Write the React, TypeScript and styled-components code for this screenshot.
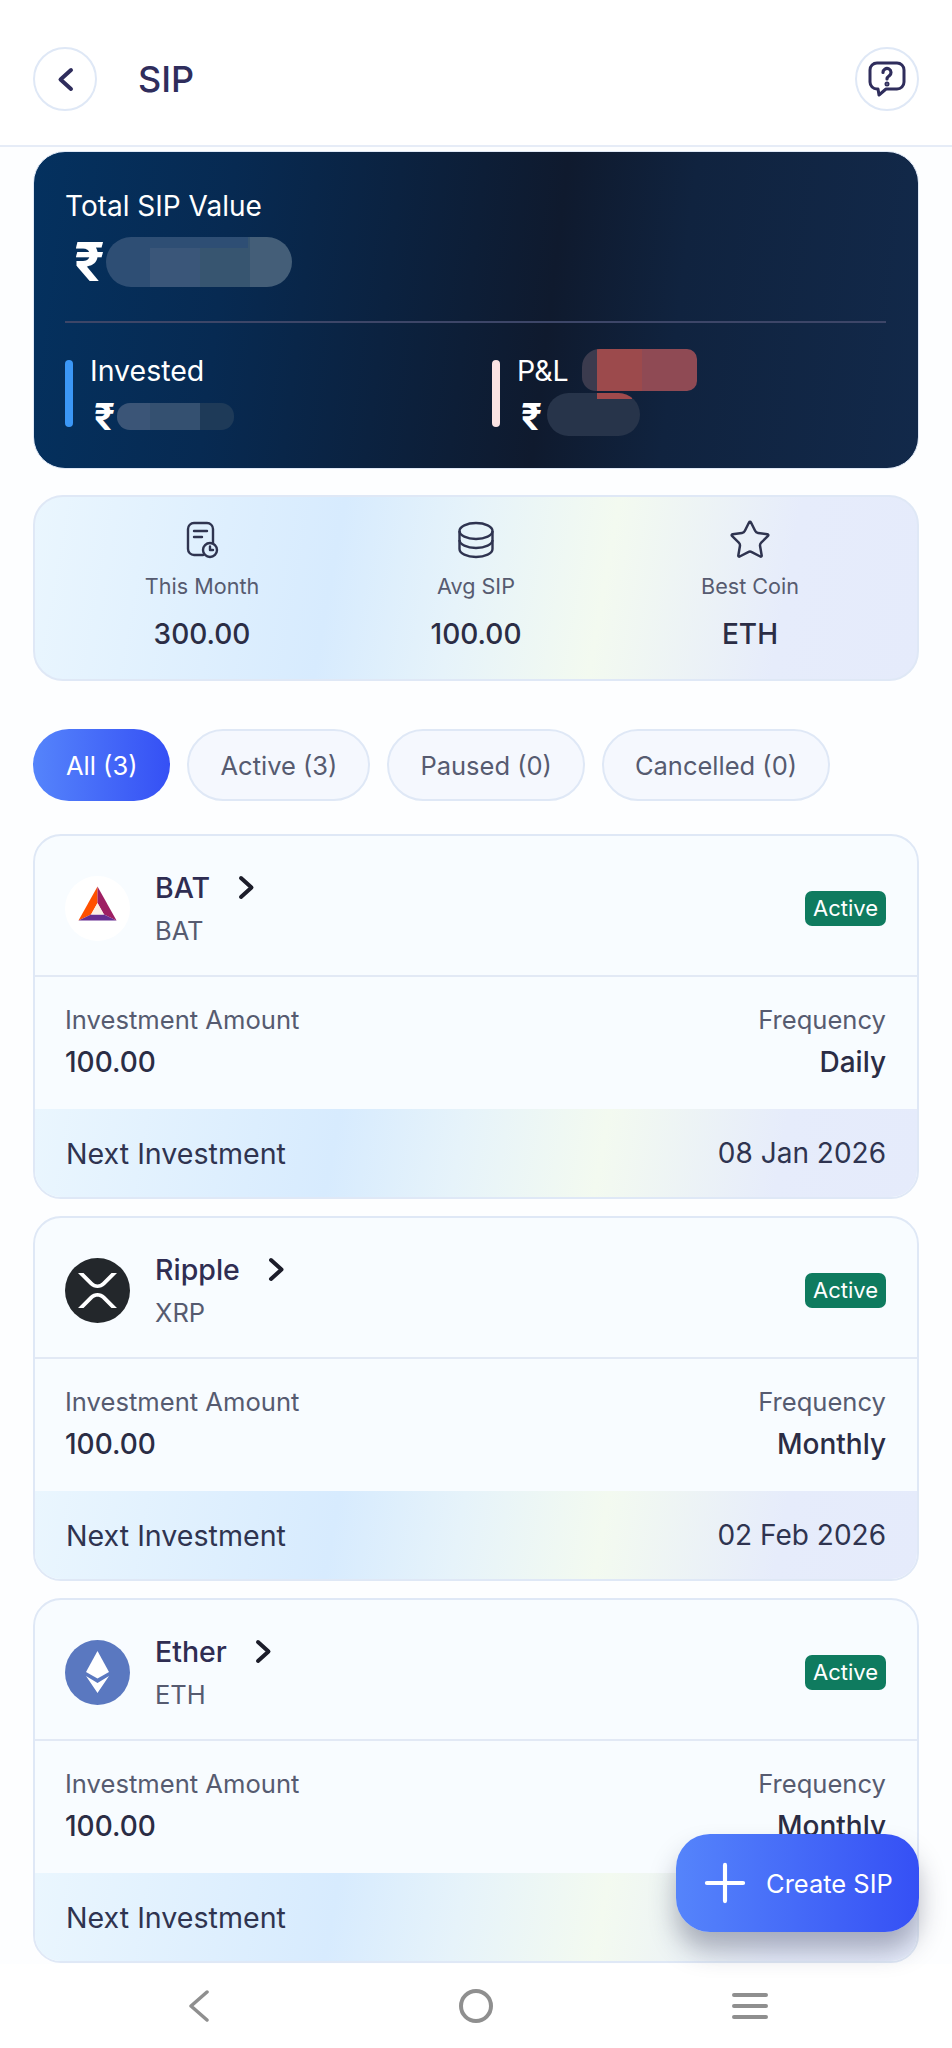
import React from "react";
import styled, { createGlobalStyle } from "styled-components";
import { Star, Plus } from "lucide-react";

const softGradient = `linear-gradient(100deg, #eaf6fe 0%, #d7ebfe 34%, #e6f3fa 48%, #f3faf0 64%, #e6ecfb 84%, #e5ebfb 100%)`;

const GlobalStyle = createGlobalStyle`
  html, body {
    margin: 0;
    padding: 0;
    background: #fff;
  }
  * {
    box-sizing: border-box;
  }
`;

const Page = styled.div`
  position: relative;
  width: 952px;
  height: 2048px;
  overflow: hidden;
  display: flex;
  flex-direction: column;
  background: #fdfeff;
  font-family: Inter, "Liberation Sans", sans-serif;
  color: #2f2d52;
`;

const Header = styled.header`
  display: flex;
  align-items: center;
  justify-content: space-between;
  padding: 47px 33px 34px;
  background: #fff;
  border-bottom: 2px solid #e6ecf7;
`;

const HeaderLeft = styled.div`
  display: flex;
  align-items: center;
  gap: 41px;
`;

const RoundButton = styled.button`
  width: 64px;
  height: 64px;
  padding: 0;
  display: flex;
  align-items: center;
  justify-content: center;
  border-radius: 50%;
  border: 2px solid #dfe8f6;
  background: #fff;
  color: #2f2d5c;
`;

const Title = styled.h1`
  margin: 0;
  font-size: 36px;
  line-height: 44px;
  font-weight: 500;
  color: #2f2d5c;
`;

const Main = styled.main`
  flex: 1;
  min-height: 0;
  padding: 4px 33px 0;
  display: flex;
  flex-direction: column;
`;

const HeroCard = styled.section`
  height: 318px;
  padding: 37px 32px 0 31px;
  border: 1px solid #dfe8f6;
  border-radius: 32px;
  background: linear-gradient(97deg, #04315f 0%, #072a52 22%, #0f1a2e 58%, #10233f 72%, #12294a 100%);
  color: #fff;
`;

const HeroLabel = styled.div`
  font-size: 28px;
  line-height: 34px;
`;

const HeroAmount = styled.div`
  display: flex;
  align-items: center;
  height: 50px;
  margin-top: 14px;
  padding-left: 9px;
`;

const Rupee = styled.span<{ $size: number; $width: number }>`
  width: ${(p) => p.$width}px;
  font-size: ${(p) => p.$size}px;
  font-weight: 700;
  line-height: 1;
  color: #fff;
`;

const BigBlur = styled.span`
  width: 186px;
  height: 50px;
  border-radius: 25px;
  background:
    linear-gradient(#2e4e74 0 11px, transparent 11px) 44px 0 / 98px 100% no-repeat,
    linear-gradient(90deg, #2e4e74 0 44px, #3a5679 44px 94px, #375570 94px 144px, #445e78 144px);
`;

const HeroDivider = styled.hr`
  height: 2px;
  margin: 34px 0 0;
  border: 0;
  background: #3d4668;
`;

const HeroStats = styled.div`
  display: grid;
  grid-template-columns: 427px 1fr;
  margin-top: 37px;
`;

const HeroStat = styled.div`
  display: flex;
  gap: 17px;
`;

const StatBar = styled.span<{ $color: string }>`
  width: 8px;
  height: 67px;
  border-radius: 4px;
  background: ${(p) => p.$color};
`;

const StatText = styled.div`
  position: relative;
  margin-top: -1px;
`;

const StatLabel = styled.div`
  font-size: 28.5px;
  line-height: 24px;
`;

const StatAmount = styled.div`
  display: flex;
  align-items: center;
  height: 27px;
  margin-top: 20px;
  padding-left: 4px;
`;

const SmallBlur = styled.span`
  width: 117px;
  height: 27px;
  border-radius: 13px;
  background: linear-gradient(90deg, #3b5577 0 33px, #345070 33px 83px, #1e3a58 83px);
`;

const DarkBlur = styled.span`
  position: relative;
  overflow: hidden;
  width: 93px;
  height: 43px;
  margin: -4px 0 0 3px;
  border-radius: 22px;
  background: #27344a;
`;

const DarkBlurTab = styled.span`
  position: absolute;
  top: 0;
  left: 50px;
  right: 8px;
  height: 6px;
  background: #a04a4c;
`;

const RedBlur = styled.span`
  position: absolute;
  top: -10px;
  left: 65px;
  width: 115px;
  height: 42px;
  border-radius: 18px 10px 10px 14px;
  background: linear-gradient(90deg, #3b3b4e 0 15px, #9c4a4c 15px 60px, #8f4a54 60px);
`;

const QuickCard = styled.section`
  display: grid;
  grid-template-columns: repeat(3, 1fr);
  height: 186px;
  margin-top: 26px;
  padding: 24px 30px 0;
  border: 2px solid #dfe8f6;
  border-radius: 30px;
  background: ${softGradient};
`;

const QuickItem = styled.div`
  display: flex;
  flex-direction: column;
  align-items: center;
`;

const QuickIcon = styled.div`
  height: 38px;
  display: flex;
  align-items: center;
  justify-content: center;
  color: #2f3450;
`;

const QuickLabel = styled.div`
  margin-top: 13px;
  font-size: 21.6px;
  line-height: 28px;
  color: #565b70;
`;

const QuickValue = styled.div`
  margin-top: 16px;
  font-size: 28px;
  line-height: 36px;
  font-weight: 500;
  color: #2b2d45;
`;

const Filters = styled.nav`
  display: flex;
  gap: 17px;
  margin-top: 48px;
`;

const FilterPill = styled.button<{ $active?: boolean }>`
  height: 72px;
  padding: 0 ${(p) => (p.$active ? 33 : 31)}px;
  border-radius: 36px;
  border: ${(p) => (p.$active ? "0" : "2px solid #dfe8f6")};
  background: ${(p) => (p.$active ? "linear-gradient(90deg, #5584fb, #3550f5)" : "#f5f8fe")};
  color: ${(p) => (p.$active ? "#fff" : "#565b70")};
  font-family: inherit;
  font-size: 25.5px;
  font-weight: 400;
`;

const CardList = styled.div`
  display: flex;
  flex-direction: column;
  gap: 17px;
  margin-top: 33px;
`;

const Card = styled.article`
  height: 365px;
  overflow: hidden;
  border: 2px solid #dfe8f6;
  border-radius: 28px;
  background: #f8fcff;
`;

const CardHead = styled.div`
  height: 141px;
  display: flex;
  align-items: center;
  justify-content: space-between;
  padding: 5px 31px 0 30px;
  border-bottom: 2px solid #e2e9f5;
`;

const CoinInfo = styled.div`
  display: flex;
  align-items: center;
  gap: 25px;
`;

const CoinName = styled.div`
  display: flex;
  align-items: center;
  gap: 28px;
  font-size: 28.5px;
  line-height: 34px;
  font-weight: 500;
  color: #2f2d52;
`;

const CoinSymbol = styled.div`
  margin-top: 11px;
  font-size: 25.5px;
  line-height: 30px;
  color: #565b70;
`;

const Badge = styled.span`
  padding: 0 8px;
  height: 35px;
  display: flex;
  align-items: center;
  border-radius: 7px;
  background: #0f7b5f;
  color: #fff;
  font-size: 22px;
`;

const CardBody = styled.div`
  height: 132px;
  display: flex;
  justify-content: space-between;
  padding: 28px 31px 0 30px;
`;

const Field = styled.div<{ $right?: boolean }>`
  text-align: ${(p) => (p.$right ? "right" : "left")};
`;

const FieldLabel = styled.div`
  font-size: 25.6px;
  line-height: 30px;
  color: #565b70;
`;

const FieldValue = styled.div`
  margin-top: 10px;
  font-size: 28px;
  line-height: 34px;
  font-weight: 500;
  color: #2b2d45;
`;

const CardFoot = styled.div`
  height: 88px;
  display: flex;
  align-items: center;
  justify-content: space-between;
  padding: 0 31px;
  background: ${softGradient};
  font-size: 28.6px;
  color: #2f3450;
`;

const NextDate = styled.span`
  font-size: 28px;
`;

const CreateButton = styled.button`
  position: absolute;
  right: 33px;
  bottom: 116px;
  width: 243px;
  height: 98px;
  display: flex;
  align-items: center;
  gap: 10px;
  padding: 0 0 0 18px;
  border: 0;
  border-radius: 34px;
  background: linear-gradient(90deg, #5584fb, #3550f5);
  box-shadow: 0 18px 26px rgba(40, 45, 70, 0.34);
  color: #fff;
  font-family: inherit;
  font-size: 25.5px;
`;

const BottomNav = styled.footer`
  height: 84px;
  display: grid;
  grid-template-columns: repeat(3, 1fr);
  padding: 0 65px;
  background: #fff;
`;

const NavSlot = styled.div<{ $shift?: number }>`
  display: flex;
  align-items: center;
  justify-content: center;
  padding-right: ${(p) => p.$shift ?? 0}px;
  color: #8f8f8f;
`;

const Chevron = ({ dir, color }: { dir: "left" | "right"; color: string }) => (
  <svg width="17" height="25" viewBox="0 0 17 25" fill="none">
    <path
      d={dir === "right" ? "M3 3l10.5 9.5L3 22" : "M14 3L3.5 12.5 14 22"}
      stroke={color}
      strokeWidth="4"
      strokeLinecap="round"
      strokeLinejoin="round"
    />
  </svg>
);

const HelpIcon = () => (
  <svg width="38" height="36" viewBox="0 0 38 36" fill="none" stroke="currentColor" strokeWidth="3" strokeLinecap="round" strokeLinejoin="round">
    <path d="M9 2h20a7 7 0 0 1 7 7v12a7 7 0 0 1-7 7H18l-7 6-1-6H9a7 7 0 0 1-7-7V9a7 7 0 0 1 7-7z" />
    <path d="M15 11.500a4 4 0 1 1 6.200 3.300c-1.400 1-2.200 1.700-2.200 3.200" strokeWidth="3.200" />
    <circle cx="19" cy="23" r="1" />
  </svg>
);

const ReceiptIcon = () => (
  <svg width="33" height="38" viewBox="0 0 33 38" fill="none" stroke="currentColor" strokeWidth="2.4" strokeLinecap="round" strokeLinejoin="round">
    <path d="M17 34H8a6 6 0 0 1-6-6V8a6 6 0 0 1 6-6h13a6 6 0 0 1 6 6v14" />
    <path d="M8 10h13M8 16h8" />
    <circle cx="24" cy="29" r="7" />
    <path d="M24 25.5V29h3" />
  </svg>
);

const CoinsIcon = () => (
  <svg width="38" height="38" viewBox="0 0 38 38" fill="none" stroke="currentColor" strokeWidth="2.4">
    <ellipse cx="19" cy="10" rx="16.5" ry="8" />
    <path d="M2.5 10v18c0 4.500 7.400 8 16.500 8s16.500-3.500 16.500-8V10" />
    <path d="M2.500 19c0 4.500 7.400 8 16.500 8s16.500-3.500 16.500-8" />
  </svg>
);

const BatLogo = () => (
  <svg width="65" height="65" viewBox="0 0 65 65">
    <circle cx="32.5" cy="32.5" r="32.500" fill="#fff" />
    <polygon points="32.500,10.500 13.500,44.500 26,38.500 32.500,27" fill="#ff5000" />
    <polygon points="32.500,10.500 51.500,44.500 39,38.500 32.500,27" fill="#9e1f63" />
    <polygon points="13.500,44.500 51.500,44.500 39,38.500 26,38.500" fill="#662d91" />
    <polygon points="32.500,27 26,38.500 39,38.500" fill="#fbeee4" />
  </svg>
);

const xrpArm = "M13 15h5.500l9.500 9.500c2.500 2.500 6.500 2.500 9 0l9.500-9.500H52L40 27c-4 4-11 4-15 0z";

const XrpLogo = () => (
  <svg width="65" height="65" viewBox="0 0 65 65">
    <circle cx="32.5" cy="32.5" r="32.500" fill="#23272b" />
    <path d={xrpArm} fill="#fff" />
    <path d={xrpArm} fill="#fff" transform="matrix(1 0 0 -1 0 65)" />
  </svg>
);

const EthLogo = () => (
  <svg width="65" height="65" viewBox="0 0 65 65">
    <circle cx="32.5" cy="32.5" r="32.500" fill="#5a78c0" />
    <polygon points="32.500,11 44,32 32.500,38.500 21,32" fill="#fff" />
    <polygon points="21,36 32.500,43 44,36 32.500,53" fill="#fff" />
  </svg>
);

const NavBack = () => (
  <svg width="23" height="32" viewBox="0 0 23 32" fill="none" stroke="currentColor" strokeWidth="3.500" strokeLinecap="round" strokeLinejoin="round">
    <path d="M20 2L4 16l16 14" />
  </svg>
);

const NavHome = () => (
  <svg width="34" height="34" viewBox="0 0 34 34" fill="none" stroke="currentColor" strokeWidth="4">
    <circle cx="17" cy="17" r="15" />
  </svg>
);

const NavMenu = () => (
  <svg width="36" height="28" viewBox="0 0 36 28" fill="none" stroke="currentColor" strokeWidth="4" strokeLinecap="round">
    <path d="M2 3h32M2 14h32M2 25h32" />
  </svg>
);

const coins = [
  { name: "BAT", symbol: "BAT", logo: <BatLogo />, frequency: "Daily", next: "08 Jan 2026" },
  { name: "Ripple", symbol: "XRP", logo: <XrpLogo />, frequency: "Monthly", next: "02 Feb 2026" },
  { name: "Ether", symbol: "ETH", logo: <EthLogo />, frequency: "Monthly", next: "02 Feb 2026" },
];

const filters = ["All (3)", "Active (3)", "Paused (0)", "Cancelled (0)"];

const App = () => {
  return (
    <Page>
      <GlobalStyle />
      <Header>
        <HeaderLeft>
          <RoundButton aria-label="Back">
            <Chevron dir="left" color="#2f2d5c" />
          </RoundButton>
          <Title>SIP</Title>
        </HeaderLeft>
        <RoundButton aria-label="Help">
          <HelpIcon />
        </RoundButton>
      </Header>

      <Main>
        <HeroCard>
          <HeroLabel>Total SIP Value</HeroLabel>
          <HeroAmount>
            <Rupee $size={54} $width={32}>₹</Rupee>
            <BigBlur />
          </HeroAmount>
          <HeroDivider />
          <HeroStats>
            <HeroStat>
              <StatBar $color="#3b97f6" />
              <StatText>
                <StatLabel>Invested</StatLabel>
                <StatAmount>
                  <Rupee $size={37} $width={23}>₹</Rupee>
                  <SmallBlur />
                </StatAmount>
              </StatText>
            </HeroStat>
            <HeroStat>
              <StatBar $color="#fbe3e3" />
              <StatText>
                <StatLabel>P&amp;L</StatLabel>
                <RedBlur />
                <StatAmount>
                  <Rupee $size={37} $width={23}>₹</Rupee>
                  <DarkBlur>
                    <DarkBlurTab />
                  </DarkBlur>
                </StatAmount>
              </StatText>
            </HeroStat>
          </HeroStats>
        </HeroCard>

        <QuickCard>
          <QuickItem>
            <QuickIcon>
              <ReceiptIcon />
            </QuickIcon>
            <QuickLabel>This Month</QuickLabel>
            <QuickValue>300.00</QuickValue>
          </QuickItem>
          <QuickItem>
            <QuickIcon>
              <CoinsIcon />
            </QuickIcon>
            <QuickLabel>Avg SIP</QuickLabel>
            <QuickValue>100.00</QuickValue>
          </QuickItem>
          <QuickItem>
            <QuickIcon>
              <Star size={44} strokeWidth={1.35} />
            </QuickIcon>
            <QuickLabel>Best Coin</QuickLabel>
            <QuickValue>ETH</QuickValue>
          </QuickItem>
        </QuickCard>

        <Filters>
          {filters.map((f, i) => (
            <FilterPill key={f} $active={i === 0}>
              {f}
            </FilterPill>
          ))}
        </Filters>

        <CardList>
          {coins.map((c) => (
            <Card key={c.name}>
              <CardHead>
                <CoinInfo>
                  {c.logo}
                  <div>
                    <CoinName>
                      {c.name}
                      <Chevron dir="right" color="#1c1d2a" />
                    </CoinName>
                    <CoinSymbol>{c.symbol}</CoinSymbol>
                  </div>
                </CoinInfo>
                <Badge>Active</Badge>
              </CardHead>
              <CardBody>
                <Field>
                  <FieldLabel>Investment Amount</FieldLabel>
                  <FieldValue>100.00</FieldValue>
                </Field>
                <Field $right>
                  <FieldLabel>Frequency</FieldLabel>
                  <FieldValue>{c.frequency}</FieldValue>
                </Field>
              </CardBody>
              <CardFoot>
                <span>Next Investment</span>
                <NextDate>{c.next}</NextDate>
              </CardFoot>
            </Card>
          ))}
        </CardList>
      </Main>

      <CreateButton>
        <Plus size={62} strokeWidth={1.6} />
        Create SIP
      </CreateButton>

      <BottomNav>
        <NavSlot $shift={8}>
          <NavBack />
        </NavSlot>
        <NavSlot>
          <NavHome />
        </NavSlot>
        <NavSlot>
          <NavMenu />
        </NavSlot>
      </BottomNav>
    </Page>
  );
};

export default App;
